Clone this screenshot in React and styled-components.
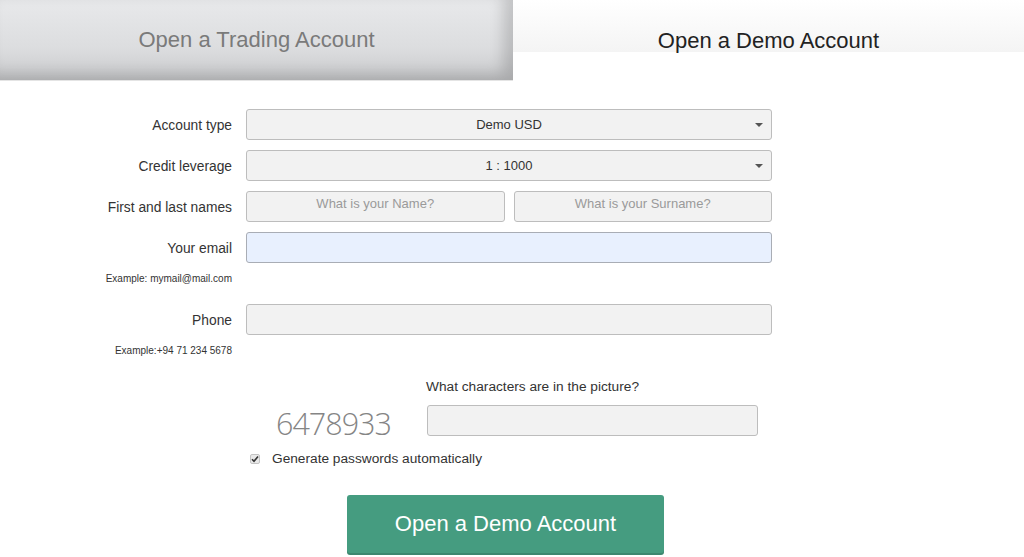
import styled, { createGlobalStyle } from 'styled-components'

const GlobalStyle = createGlobalStyle`
  body {
    margin: 0;
    background: #fff;
    font-family: "Liberation Sans", Arial, sans-serif;
    color: #333;
  }
`

const Page = styled.div`
  width: 1024px;
  height: 557px;
  overflow: hidden;
`

const Tabs = styled.div`
  display: flex;
  height: 81px;
`

const Tab = styled.div`
  flex: 1;
  display: flex;
  align-items: center;
  justify-content: center;
  font-size: 22px;
  box-sizing: border-box;
  &.inactive {
    flex: 0 0 513px;
    color: #7a7a7a;
    background: linear-gradient(#e8e9eb, #dcdddf 60%, #c9cacc);
    box-shadow: inset -10px -6px 14px rgba(0, 0, 0, 0.16);
    border-bottom: 1px solid #e4e4e4;
  }
  &.active {
    color: #222;
    background: linear-gradient(#ffffff 0, #f4f4f4 52px, #ffffff 52px);
  }
`

const Form = styled.div`
  display: grid;
  grid-template-columns: 232px 526px;
  column-gap: 14px;
  row-gap: 10px;
  padding-top: 28px;
`

const Label = styled.div`
  font-size: 13.8px;
  text-align: right;
  align-self: center;
  color: #333;
  padding-top: 1px;
`

const Hint = styled.div`
  font-size: 10px;
  line-height: 12px;
  text-align: right;
  color: #333;
  margin-bottom: 9px;
`

const Field = styled.div`
  position: relative;
  height: 31px;
  box-sizing: border-box;
  border: 1px solid #bdbdbd;
  border-radius: 3px;
  background: ${({ $filled }) => ($filled ? '#e8f0fe' : '#f2f2f2')};
  border-color: ${({ $filled }) => ($filled ? '#a9adb5' : '#bdbdbd')};
  display: flex;
  align-items: center;
  justify-content: center;
  font-size: 13px;
  color: #333;
  padding-bottom: 1px;
`

const Placeholder = styled.span`
  color: #9a9a9a;
  font-size: 13px;
  margin-top: -5px;
`

const Caret = styled.span`
  position: absolute;
  right: 8px;
  top: 13px;
  width: 0;
  height: 0;
  border-left: 4px solid transparent;
  border-right: 4px solid transparent;
  border-top: 4px solid #555;
`

const Pair = styled.div`
  display: grid;
  grid-template-columns: 1fr 1fr;
  column-gap: 9px;
`

const Spacer = styled.div``

const Captcha = styled.div`
  grid-column: 2;
  display: flex;
  flex-direction: column;
  margin-top: 3px;
`

const Question = styled.div`
  font-size: 13.7px;
  line-height: 16px;
  padding-left: 180px;
  margin-bottom: 2px;
`

const CaptchaRow = styled.div`
  display: flex;
  align-items: center;
`

const Digits = styled.div`
  width: 181px;
  padding-left: 30px;
  box-sizing: border-box;
  font-family: "Open Sans", sans-serif;
  font-weight: 300;
  font-size: 30.5px;
  letter-spacing: -1px;
  color: #858585;
  margin-top: 5px;
`

const CaptchaInput = styled(Field)`
  width: 331px;
`

const CheckRow = styled.label`
  display: flex;
  align-items: center;
  margin-top: 7px;
  padding-left: 4px;
  font-size: 13.7px;
  color: #333;
`

const Box = styled.span`
  width: 10px;
  height: 10px;
  box-sizing: border-box;
  border: 1px solid #c4c4c4;
  border-radius: 2px;
  background: #e9e9e9;
  display: flex;
  align-items: center;
  justify-content: center;
  margin-right: 12px;
`

const Submit = styled.div`
  margin: 29px 0 0 347px;
  width: 317px;
  height: 58px;
  box-sizing: border-box;
  border-radius: 3px;
  background: #459c80;
  box-shadow: 0 2px 0 #3c876f;
  color: #fff;
  font-size: 22px;
  display: flex;
  align-items: center;
  justify-content: center;
`

const Select = ({ value }) => (
  <Field>
    {value}
    <Caret />
  </Field>
)

export default function App() {
  return (
    <Page>
      <GlobalStyle />
      <Tabs>
        <Tab className="inactive">Open a Trading Account</Tab>
        <Tab className="active">Open a Demo Account</Tab>
      </Tabs>
      <Form>
        <Label>Account type</Label>
        <Select value="Demo USD" />
        <Label>Credit leverage</Label>
        <Select value="1 : 1000" />
        <Label>First and last names</Label>
        <Pair>
          <Field><Placeholder>What is your Name?</Placeholder></Field>
          <Field><Placeholder>What is your Surname?</Placeholder></Field>
        </Pair>
        <Label>Your email</Label>
        <Field $filled />
        <Hint>Example: mymail@mail.com</Hint>
        <Spacer />
        <Label>Phone</Label>
        <Field />
        <Hint>Example:+94 71 234 5678</Hint>
        <Spacer />
        <Captcha>
          <Question>What characters are in the picture?</Question>
          <CaptchaRow>
            <Digits>6478933</Digits>
            <CaptchaInput />
          </CaptchaRow>
          <CheckRow>
            <Box>
              <svg width="8" height="8" viewBox="0 0 8 8">
                <path d="M1 4.2 L3 6.2 L7 1.5" fill="none" stroke="#333" strokeWidth="1.6" />
              </svg>
            </Box>
            Generate passwords automatically
          </CheckRow>
        </Captcha>
      </Form>
      <Submit>Open a Demo Account</Submit>
    </Page>
  )
}
